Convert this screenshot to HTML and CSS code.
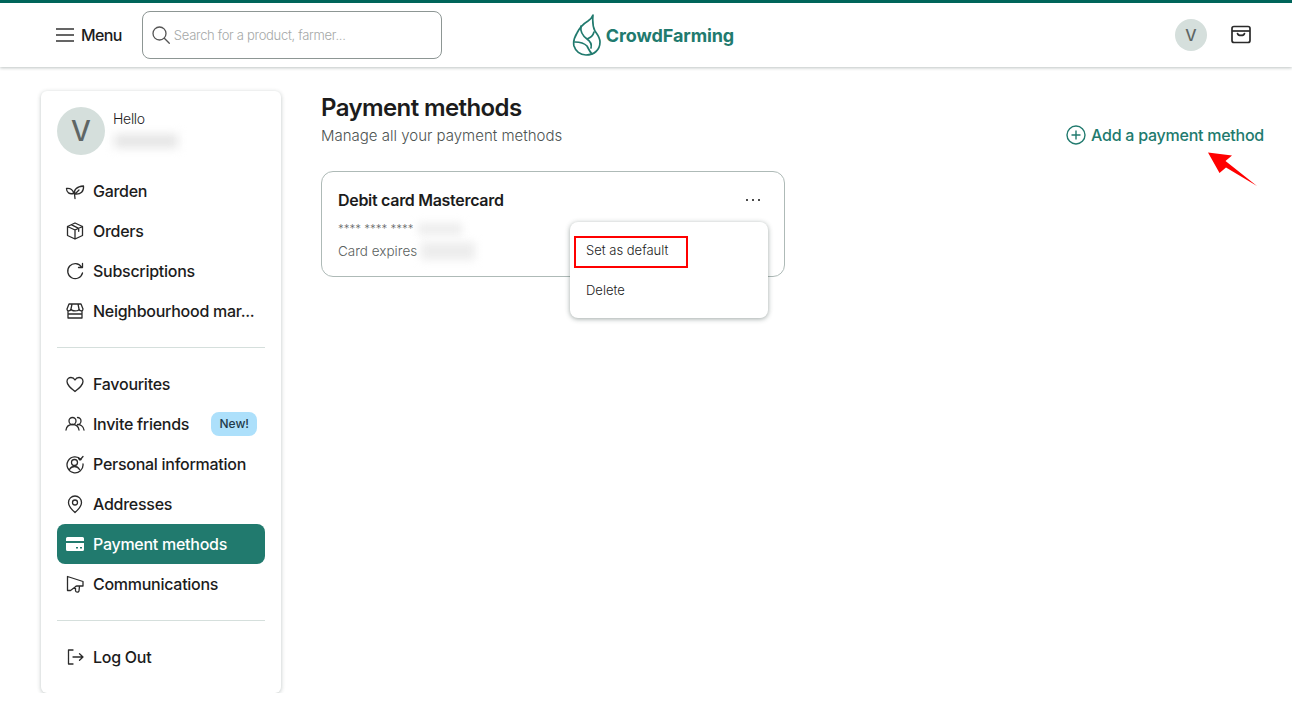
FILE: index.html
```html
<!DOCTYPE html>
<html lang="en">
  <head>
    <meta charset="UTF-8" />
    <meta name="viewport" content="width=device-width, initial-scale=1.0" />
    <title>Payment methods</title>
    <link rel="stylesheet" href="styles.css">
  </head>
  <body>
    <header class="topbar">
      <button class="menu-btn" type="button">
        <svg width="20" height="20" viewBox="0 0 20 20" fill="none" stroke="#333" stroke-width="1.6"><path d="M1 4h18M1 10h18M1 16h18"/></svg>
        <span>Menu</span>
      </button>
      <div class="search">
        <svg width="20" height="20" viewBox="0 0 20 20" fill="none" stroke="#555" stroke-width="1.3" stroke-linecap="round"><circle cx="8.500" cy="8.500" r="6.500"/><path d="M13.300 13.300l5 5"/></svg>
        <span>Search for a product, farmer...</span>
      </div>
      <a class="logo">
        <svg width="30" height="42" viewBox="0 0 30 42" fill="none" stroke="#217a6e" stroke-width="1.700" stroke-linecap="round" stroke-linejoin="round">
          <path d="M21 1c-1 3-2 4-5 6-5 3-8 6-11 12C2 24 1 28 2 32c1.500 5 6 9 12 9 8 0 14-5 14-13 0-5-3-8-5-11-1.500-3-3-5-2-16z"/>
          <path d="M9 12c-1 6 2 10 6 13 3 2 5 5 4 9M3 28c5 0 9 1 12 4 1 2 3 6 5 8M15 25c3-1 6-3 7-7"/>
        </svg>
        <span>CrowdFarming</span>
      </a>
      <div class="topbar-right">
        <div class="avatar small">V</div>
        <svg width="22" height="20" viewBox="0 0 22 20" fill="none" stroke="#2b2b2b" stroke-width="1.700" stroke-linejoin="round"><rect x="2" y="1.500" width="18" height="16" rx="2"/><path d="M2 6h18"/><path d="M7.500 8.500c.5 2.500 6.500 2.500 7 0" stroke-linecap="round"/></svg>
      </div>
    </header>

    <div class="layout">
      <aside class="sidebar">
        <div class="profile">
          <div class="avatar">V</div>
          <div class="profile-text">
            <span>Hello</span>
            <div class="blurred name"></div>
          </div>
        </div>

        <nav class="nav-group">
          <a class="nav-item">
            <svg viewBox="0 0 20 20"><path d="M9.500 13c-1-4 2-7.500 9-8 .5 5-2.500 9-9 8zM8.500 12.500C8.500 9 5.500 7 1.500 7.500c0 4 3 6 7 5zM9.500 13l.5 4.500M10 13l4-4"/></svg>
            Garden
          </a>
          <a class="nav-item">
            <svg viewBox="0 0 20 20"><path d="M10 2l7.500 3.500v9L10 18l-7.500-3.500v-9zM2.500 5.500L10 9l7.500-3.500M10 9v9M6.200 3.700l7.500 3.600v3"/></svg>
            Orders
          </a>
          <a class="nav-item">
            <svg viewBox="0 0 20 20"><path d="M16.500 6a7.500 7.500 0 1 0 1 6M17.500 2.500V6.500H13.500"/></svg>
            Subscriptions
          </a>
          <a class="nav-item">
            <svg viewBox="0 0 20 20"><path d="M4 3h12l2 5c0 2.500-3.500 2.500-4 0 0 2.500-7.500 2.500-8 0-.5 2.500-4 2.500-4 0zM3 10v7h14v-7M3 13h14M7 3L6 8M13 3l1 5"/></svg>
            Neighbourhood mar...
          </a>
        </nav>

        <nav class="nav-group divided">
          <a class="nav-item">
            <svg viewBox="0 0 20 20"><path d="M10 17.500C5 13.500 2 11 2 7.500 2 5 4 3.500 6 3.500c1.700 0 3.200 1 4 2.500.8-1.500 2.300-2.500 4-2.500 2 0 4 1.500 4 4 0 3.500-3 6-8 10z"/></svg>
            Favourites
          </a>
          <a class="nav-item">
            <svg viewBox="0 0 20 20"><circle cx="7.500" cy="7" r="3.500"/><path d="M1 16c.5-3.500 3-5.500 6.500-5.500S13.500 12.500 14 16M12.500 3.500a3.500 3.500 0 0 1 0 7c2.500 0 6 1.500 6.500 5.500"/></svg>
            <span>Invite friends</span>
            <span class="badge">New!</span>
          </a>
          <a class="nav-item">
            <svg viewBox="0 0 20 20"><path d="M16 5.500A8 8 0 1 0 18 10"/><circle cx="9.500" cy="8.500" r="3"/><path d="M4.500 15.500c1-2 3-3 5-3s4 1 5 3M13.500 4.500l1.500 1.500 3-3.500"/></svg>
            Personal information
          </a>
          <a class="nav-item">
            <svg viewBox="0 0 20 20"><path d="M10 18.500c-4-3.500-6.500-6.500-6.500-10a6.500 6.500 0 0 1 13 0c0 3.500-2.500 6.500-6.500 10z"/><circle cx="10" cy="8.500" r="2.500"/></svg>
            Addresses
          </a>
          <a class="nav-item active">
            <svg viewBox="0 0 20 20" class="filled"><path fill-rule="evenodd" d="M2.500 3h15A1.500 1.500 0 0 1 19 4.500v11a1.500 1.500 0 0 1-1.500 1.500h-15A1.500 1.500 0 0 1 1 15.500v-11A1.500 1.500 0 0 1 2.500 3zM1 7v2h18V7zM11 13v1.500h2V13zM15 13v1.500h2V13z"/></svg>
            Payment methods
          </a>
          <a class="nav-item">
            <svg viewBox="0 0 20 20"><path d="M2.500 2.500v14h3l6-4.500h6.500V7.500zM10.500 12.500v4c0 2 3 2 3.500.5l.5-5"/></svg>
            Communications
          </a>
        </nav>

        <nav class="nav-group divided">
          <a class="nav-item">
            <svg viewBox="0 0 20 20"><path d="M8 3H3.500v14H8M8 10h10M14.500 6.800L18 10l-3.500 3.200"/></svg>
            Log Out
          </a>
        </nav>
      </aside>

      <main class="content">
        <div class="content-head">
          <div>
            <h1>Payment methods</h1>
            <p>Manage all your payment methods</p>
          </div>
          <a class="add-link">
            <svg width="20" height="20" viewBox="0 0 20 20" fill="none" stroke="#217a6e" stroke-width="1.400"><circle cx="10" cy="10" r="9"/><path d="M10 5.500v9M5.500 10h9"/></svg>
            Add a payment method
          </a>
        </div>

        <section class="card">
          <div class="card-top">
            <h2>Debit card Mastercard</h2>
            <span class="dots">
              <i></i><i></i><i></i>
            </span>
          </div>
          <div class="card-line number">**** **** **** <div class="blurred digits"></div></div>
          <div class="card-line">Card expires <div class="blurred expiry"></div></div>

          <div class="card-menu">
            <div class="menu-item">Set as default</div>
            <div class="menu-item">Delete</div>
            <div class="red-box"></div>
          </div>
        </section>
      </main>
    </div>

    <svg class="red-arrow" width="52" height="38" viewBox="0 0 52 38"><path fill="#f00" d="M1 1.500L25 4.500 18.500 10 50 35 19 16.500 12.500 22z"/></svg>
  </body>
</html>
```

FILE: styles.css
```css
* {
  box-sizing: border-box;
}
body {
  margin: 0;
  background: #fff;
  color: #1c1c1c;
  font-family: Inter, "Liberation Sans", sans-serif;
  font-size: 16px;
}
.topbar {
  display: flex;
  align-items: center;
  height: 67px;
  padding: 0 40px 0 55px;
  background: #fff;
  border-top: 3px solid #00655a;
  box-shadow: 0 1px 3px rgba(40, 60, 55, 0.3);
}
.menu-btn {
  display: flex;
  align-items: center;
  gap: 6px;
  padding: 0;
  border: none;
  background: none;
  color: #1c1c1c;
  font: 500 16px Inter, sans-serif;
  letter-spacing: -0.6px;
}
.search {
  display: flex;
  align-items: center;
  gap: 3px;
  width: 300px;
  height: 48px;
  margin-left: 20px;
  padding: 0 8px;
  border: 1px solid #8d9694;
  border-radius: 8px;
  color: #a5a8a7;
  font-size: 13px;
  font-weight: 300;
  letter-spacing: -0.3px;
}
.logo {
  display: flex;
  align-items: center;
  gap: 4px;
  margin-left: 130px;
  color: #217a6e;
  font-size: 18px;
  font-weight: 700;
  letter-spacing: -0.1px;
}
.topbar-right {
  display: flex;
  align-items: center;
  gap: 23px;
  margin-left: auto;
}
.avatar {
  display: flex;
  align-items: center;
  justify-content: center;
  flex: none;
  width: 48px;
  height: 48px;
  border-radius: 50%;
  background: #d5dfdc;
  color: #5f6665;
  font-size: 28px;
  font-weight: 500;
}
.avatar.small {
  width: 32px;
  height: 32px;
  font-size: 16px;
}
.layout {
  display: flex;
  gap: 40px;
  padding: 24px 28px 0 41px;
}
.sidebar {
  flex: none;
  width: 240px;
  height: 602px;
  padding: 16px;
  border-radius: 6px;
  background: #fff;
  box-shadow: 0 1px 4px rgba(40, 60, 55, 0.3);
}
.profile {
  display: flex;
  gap: 8px;
  margin-bottom: 16px;
}
.profile-text {
  font-size: 14px;
  font-weight: 300;
  letter-spacing: -0.3px;
  padding-top: 3px;
}
.blurred {
  display: inline-block;
  background: #ededed;
  filter: blur(4px);
}
.name {
  display: block;
  width: 64px;
  height: 14px;
  margin: 7px 0 0 1px;
  background: #e6e6e6;
  filter: blur(5px);
}
.nav-group.divided {
  margin-top: 16px;
  padding-top: 16px;
  border-top: 1px solid #d5dfdc;
}
.nav-item {
  display: flex;
  align-items: center;
  gap: 8px;
  height: 40px;
  padding: 0 8px;
  border-radius: 8px;
  font-weight: 500;
  letter-spacing: -0.27px;
  white-space: nowrap;
}
.nav-item svg {
  flex: none;
  width: 20px;
  height: 20px;
  fill: none;
  stroke: #2b2b2b;
  stroke-width: 1.3;
  stroke-linecap: round;
  stroke-linejoin: round;
}
.nav-item.active {
  background: #217a6e;
  color: #fff;
}
.nav-item svg.filled {
  fill: #fff;
  stroke: none;
}
.badge {
  margin-left: auto;
  padding: 4px 8px;
  border-radius: 8px;
  background: #ade0fb;
  color: #1f3a4a;
  font-size: 12px;
  letter-spacing: 0;
  line-height: 16px;
}
.content {
  flex: 1;
}
.content-head {
  display: flex;
  align-items: flex-end;
  justify-content: space-between;
}
h1 {
  margin: 0;
  padding-top: 2px;
  font-size: 24px;
  font-weight: 600;
  letter-spacing: -0.6px;
  line-height: 30px;
}
.content-head p {
  margin: 2px 0 0;
  color: #4d5352;
  font-size: 15px;
  font-weight: 300;
  line-height: 22px;
}
.add-link {
  display: flex;
  align-items: center;
  gap: 5px;
  margin-bottom: 1px;
  color: #217a6e;
  font-weight: 500;
  letter-spacing: -0.25px;
  line-height: 22px;
}
.card {
  position: relative;
  width: 464px;
  height: 106px;
  margin-top: 24px;
  padding: 16px;
  border: 1px solid #aebab7;
  border-radius: 12px;
}
.card-top {
  display: flex;
  align-items: center;
  justify-content: space-between;
}
h2 {
  margin: 0;
  font-size: 16px;
  font-weight: 600;
  letter-spacing: -0.3px;
  line-height: 24px;
}
.dots {
  display: flex;
  gap: 3.500px;
  margin-right: 8px;
}
.dots i {
  width: 2.500px;
  height: 2.500px;
  background: #111;
  border-radius: 50%;
}
.card-line {
  display: flex;
  align-items: center;
  gap: 4px;
  color: #5b6160;
  font-size: 13.5px;
  font-weight: 300;
  line-height: 22px;
}
.number {
  margin-top: 6px;
  font-size: 11.500px;
}
.digits {
  width: 44px;
  height: 12px;
}
.expiry {
  width: 54px;
  height: 18px;
}
.card-menu {
  position: absolute;
  top: 50px;
  left: 248px;
  width: 198px;
  padding: 8px 0;
  border-radius: 8px;
  background: #fff;
  box-shadow: 0 1px 5px rgba(40, 60, 55, 0.45);
}
.menu-item {
  padding: 0 16px;
  font-size: 13px;
  font-weight: 300;
  line-height: 40px;
}
.red-box {
  position: absolute;
  top: 14px;
  left: 4px;
  width: 114px;
  height: 32px;
  border: 2px solid #f00;
}
.red-arrow {
  position: absolute;
  top: 151px;
  left: 1207px;
}
```
